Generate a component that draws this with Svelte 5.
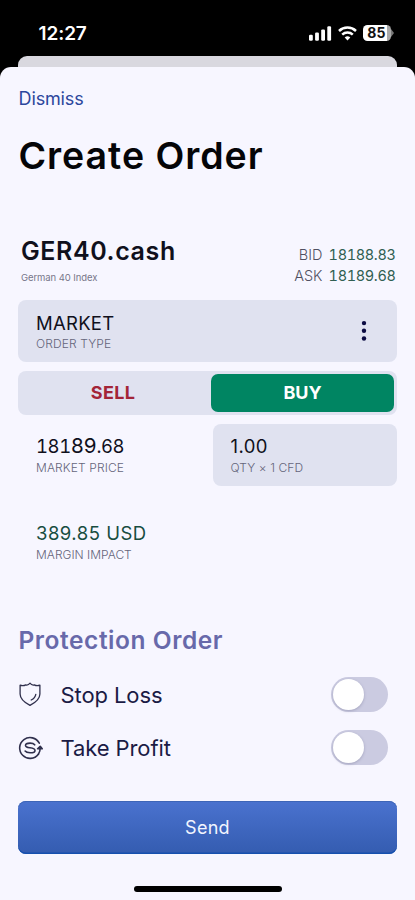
<script>
  let side = $state('BUY');
  let stopLoss = $state(false);
  let takeProfit = $state(false);
</script>

<div class="screen">
  <header class="status">
    <span class="clock">12:27</span>
    <div class="indicators">
      <svg width="23" height="16" viewBox="0 0 23 16" fill="#fff">
        <rect x="0" y="9.8" width="3.8" height="5.9" rx="1.2" />
        <rect x="6.1" y="7.4" width="3.8" height="8.3" rx="1.2" />
        <rect x="12.2" y="4.4" width="3.8" height="11.3" rx="1.2" />
        <rect x="18.3" y="1.2" width="3.8" height="14.5" rx="1.2" />
      </svg>
      <svg class="wifi" width="19" height="16" viewBox="0 0 19 16" fill="none" stroke="#fff" stroke-width="2.5">
        <path d="M1 6a12.3 12.3 0 0 1 17 0" />
        <path d="M4.2 9.6a7.7 7.7 0 0 1 10.6 0" />
        <path d="M9.5 15.6 6.7 12.5a4.2 4.2 0 0 1 5.6 0z" fill="#fff" stroke="none" />
      </svg>
      <div class="battery"><span>85</span></div>
      <svg width="4" height="8" viewBox="0 0 4 8"><path d="M0 0 3 4 0 8z" fill="#777" /></svg>
    </div>
  </header>
  <div class="behind"></div>

  <main class="sheet">
    <button class="dismiss">Dismiss</button>
    <h1>Create Order</h1>

    <section class="instrument">
      <div class="names">
        <div class="symbol">GER40.cash</div>
        <div class="desc">German 40 Index</div>
      </div>
      <div class="quotes">
        <div>BID <span>18188.83</span></div>
        <div>ASK <span>18189.68</span></div>
      </div>
    </section>

    <section class="box type">
      <div>
        <div class="value market">MARKET</div>
        <div class="label ordertype">ORDER TYPE</div>
      </div>
      <svg width="6" height="22" viewBox="0 0 6 22" fill="#0b0b42">
        <circle cx="3" cy="3.1" r="2.2" /><circle cx="3" cy="10.8" r="2.2" /><circle cx="3" cy="18.5" r="2.2" />
      </svg>
    </section>

    <section class="sides">
      <button class="sell" aria-pressed={side === 'SELL'} onclick={() => (side = 'SELL')}>SELL</button>
      <button class="buy" aria-pressed={side === 'BUY'} onclick={() => (side = 'BUY')}>BUY</button>
    </section>

    <section class="pair">
      <div class="cell">
        <div class="value price">181<span class="rolling">89</span>.68</div>
        <div class="label mp">MARKET PRICE</div>
      </div>
      <div class="cell box qty">
        <div class="value">1.00</div>
        <div class="label">QTY × 1 CFD</div>
      </div>
    </section>

    <section class="margin">
      <div class="value green">389.85 USD</div>
      <div class="label mi">MARGIN IMPACT</div>
    </section>

    <h2>Protection Order</h2>

    <div class="row">
      <svg width="25" height="26" viewBox="0 0 25 26" fill="none" stroke="#30304d" stroke-width="1.3" stroke-linejoin="round" stroke-linecap="round">
        <path d="M12 1.2C10.8 2.8 9.5 3.4 7.7 2.9 5.6 4.1 3.9 3.8 2.1 3.2v8.8c0 5 4 8.3 9.9 11.4 5.9-3.1 9.9-6.4 9.9-11.4V3.2c-1.8.6-3.5.9-5.6-.3-1.8.5-3.1-.1-4.3-1.7z" />
        <path d="M17.8 12.3c-.4 2.4-2 4.3-4.6 5.7" />
      </svg>
      <span class="stop">Stop Loss</span>
      <button class="toggle" class:on={stopLoss} aria-label="Stop Loss" onclick={() => (stopLoss = !stopLoss)}><i></i></button>
    </div>
    <div class="row">
      <svg width="25" height="26" viewBox="0 0 25 26" fill="none" stroke="#30304d" stroke-width="1.6" stroke-linejoin="round" stroke-linecap="round">
        <path d="M21.3 8.2A10.4 10.4 0 1 0 20.4 19.2" />
        <path d="M20.4 19.2C21.7 17.4 22.3 15.3 22.2 12.3" />
        <path d="M19.6 13.8 22.2 11.3l2 2.5z" fill="#30304d" />
        <path d="M16.7 9.8c-1-1.3-2.6-1.7-4.6-1.7-2.7 0-4.6.8-4.6 2.3 0 1.7 2.2 2 4.6 2.4 2.6.4 4.9.9 4.9 2.6 0 1.6-2.1 2.4-4.9 2.4-2.2 0-4.1-.5-5-1.7" />
      </svg>
      <span class="take">Take Profit</span>
      <button class="toggle" class:on={takeProfit} aria-label="Take Profit" onclick={() => (takeProfit = !takeProfit)}><i></i></button>
    </div>

    <button class="send">Send</button>
    <div class="home"></div>
  </main>
</div>

<style>
  :global(body) { background: #000; overflow: hidden; }
  * { box-sizing: border-box; }
  button { font: inherit; border: 0; padding: 0; background: none; color: inherit; }
  .screen {
    width: 415px; height: 900px; background: #000; color: #10101c;
    font-family: Inter, "Liberation Sans", sans-serif;
    display: flex; flex-direction: column; overflow: hidden; white-space: nowrap;
  }
  .status { height: 56px; flex: none; display: flex; justify-content: space-between; padding: 22px 20px 0 38.5px; }
  .clock { color: #fff; font-size: 19px; font-weight: 600; line-height: 24px; letter-spacing: -0.1px; }
  .indicators { display: flex; align-items: center; height: 22px; }
  .wifi { margin-left: 6px; }
  .battery {
    margin-left: 6px; width: 28px; height: 16px; border-radius: 4.5px;
    background: linear-gradient(90deg, #fff 86%, #aaa 86%); color: #111;
    font-size: 14px; font-weight: 700; line-height: 16px; text-align: center; letter-spacing: 0.3px;
  }
  .battery span { margin-left: -1px; }
  .behind { height: 11px; flex: none; margin: 0 18px; background: #d9d8df; border-radius: 9px 9px 0 0; }
  .sheet {
    flex: 1; background: #f7f6ff; border-radius: 11px 11px 0 0; padding: 19px 18px 0;
    display: flex; flex-direction: column;
  }
  .dismiss { align-self: flex-start; color: #2c479d; font-size: 18px; line-height: 26px; height: 24px; font-weight: 400; letter-spacing: -0.15px; padding-left: 0.6px; }
  h1 { margin: 21px 0 0 0.5px; font-size: 37.5px; line-height: 50px; font-weight: 600; color: #050508; letter-spacing: 0.95px; }
  .instrument { margin-top: 54px; height: 65px; display: flex; justify-content: space-between; padding: 0 1.5px 0 3px; }
  .symbol { font-size: 25px; line-height: 32px; font-weight: 600; letter-spacing: 0.6px; }
  .desc { font-size: 9.5px; line-height: 12px; margin-top: 5px; color: #77768a; letter-spacing: -0.08px; }
  .quotes { text-align: right; font-size: 14.5px; line-height: 21px; padding-top: 9px; color: #505061; font-weight: 300; }
  .quotes span { color: #315f52; margin-left: 2px; font-weight: 400; font-variant-numeric: tabular-nums; letter-spacing: -0.35px; }
  .box { background: #e0e2f0; border-radius: 8px; }
  .type { height: 62px; display: flex; justify-content: space-between; align-items: center; padding: 0 30px 0 18px; }
  .value { font-size: 18.5px; line-height: 24px; font-weight: 400; }
  .market { letter-spacing: 0.25px; }
  .label { font-size: 12px; line-height: 16px; color: #65657b; font-weight: 300; margin-top: 1px; }
  .ordertype, .mp { letter-spacing: 0.12px; }
  .sides { margin-top: 9px; height: 44px; background: #e0e2f0; border-radius: 8px; display: flex; padding: 3px; font-size: 18px; font-weight: 700; }
  .sell { flex: 1; color: #a32538; letter-spacing: 0.3px; padding: 0 6px 2px 0; }
  .buy { width: 183px; height: 38px; border-radius: 7px; background: #008562; color: #fff; padding-bottom: 2px; }
  .pair { margin-top: 9px; height: 62px; display: flex; }
  .cell { width: 194.5px; padding: 10px 18px 0; }
  .mp, .mi { margin-top: 2px; }
  .price { font-variant-numeric: tabular-nums; letter-spacing: -0.42px; }
  .qty { flex: 1; width: auto; }
  .qty .value { letter-spacing: 0.4px; }
  .qty .label { margin-top: 2px; letter-spacing: 0.1px; }
  .rolling { font-size: 20.5px; line-height: 20px; }
  .margin { margin-top: 35px; padding-left: 18px; height: 60px; }
  .green { color: #174d3f; letter-spacing: 0.5px; }
  h2 { margin: 44px 0 0 0.5px; font-size: 24.5px; line-height: 30px; color: #6869aa; font-weight: 600; letter-spacing: 0.55px; }
  .row { height: 53px; display: flex; align-items: center; padding-right: 9.5px; }
  h2 + .row { margin-top: 13px; }
  .row span { margin-left: 17.5px; font-size: 22px; line-height: 30px; color: #1b1b45; flex: 1; }
  .row .stop { letter-spacing: -0.1px; }
  .row .take { letter-spacing: -0.1px; }
  .toggle { width: 57px; height: 35px; border-radius: 18px; background: #cbcbe1; padding: 2px; display: flex; }
  .toggle i { width: 31px; height: 31px; border-radius: 50%; background: #fff; box-shadow: 0 1px 3px #55557755; }
  .on i { margin-left: auto; }
  .send {
    margin-top: 26.5px; height: 53px; flex: none; border-radius: 8px; color: #f2f5ff; font-size: 18px; letter-spacing: 0.3px; padding-top: 1px;
    background: linear-gradient(#4a72cf, #345cb0); box-shadow: inset 0 -1.5px 0 #1650ae, inset 0 1px 0 #3d65b7;
  }
  .home { align-self: center; margin: 32.5px 0 0 1px; width: 148px; height: 5.5px; border-radius: 3px; background: #000; }
</style>
